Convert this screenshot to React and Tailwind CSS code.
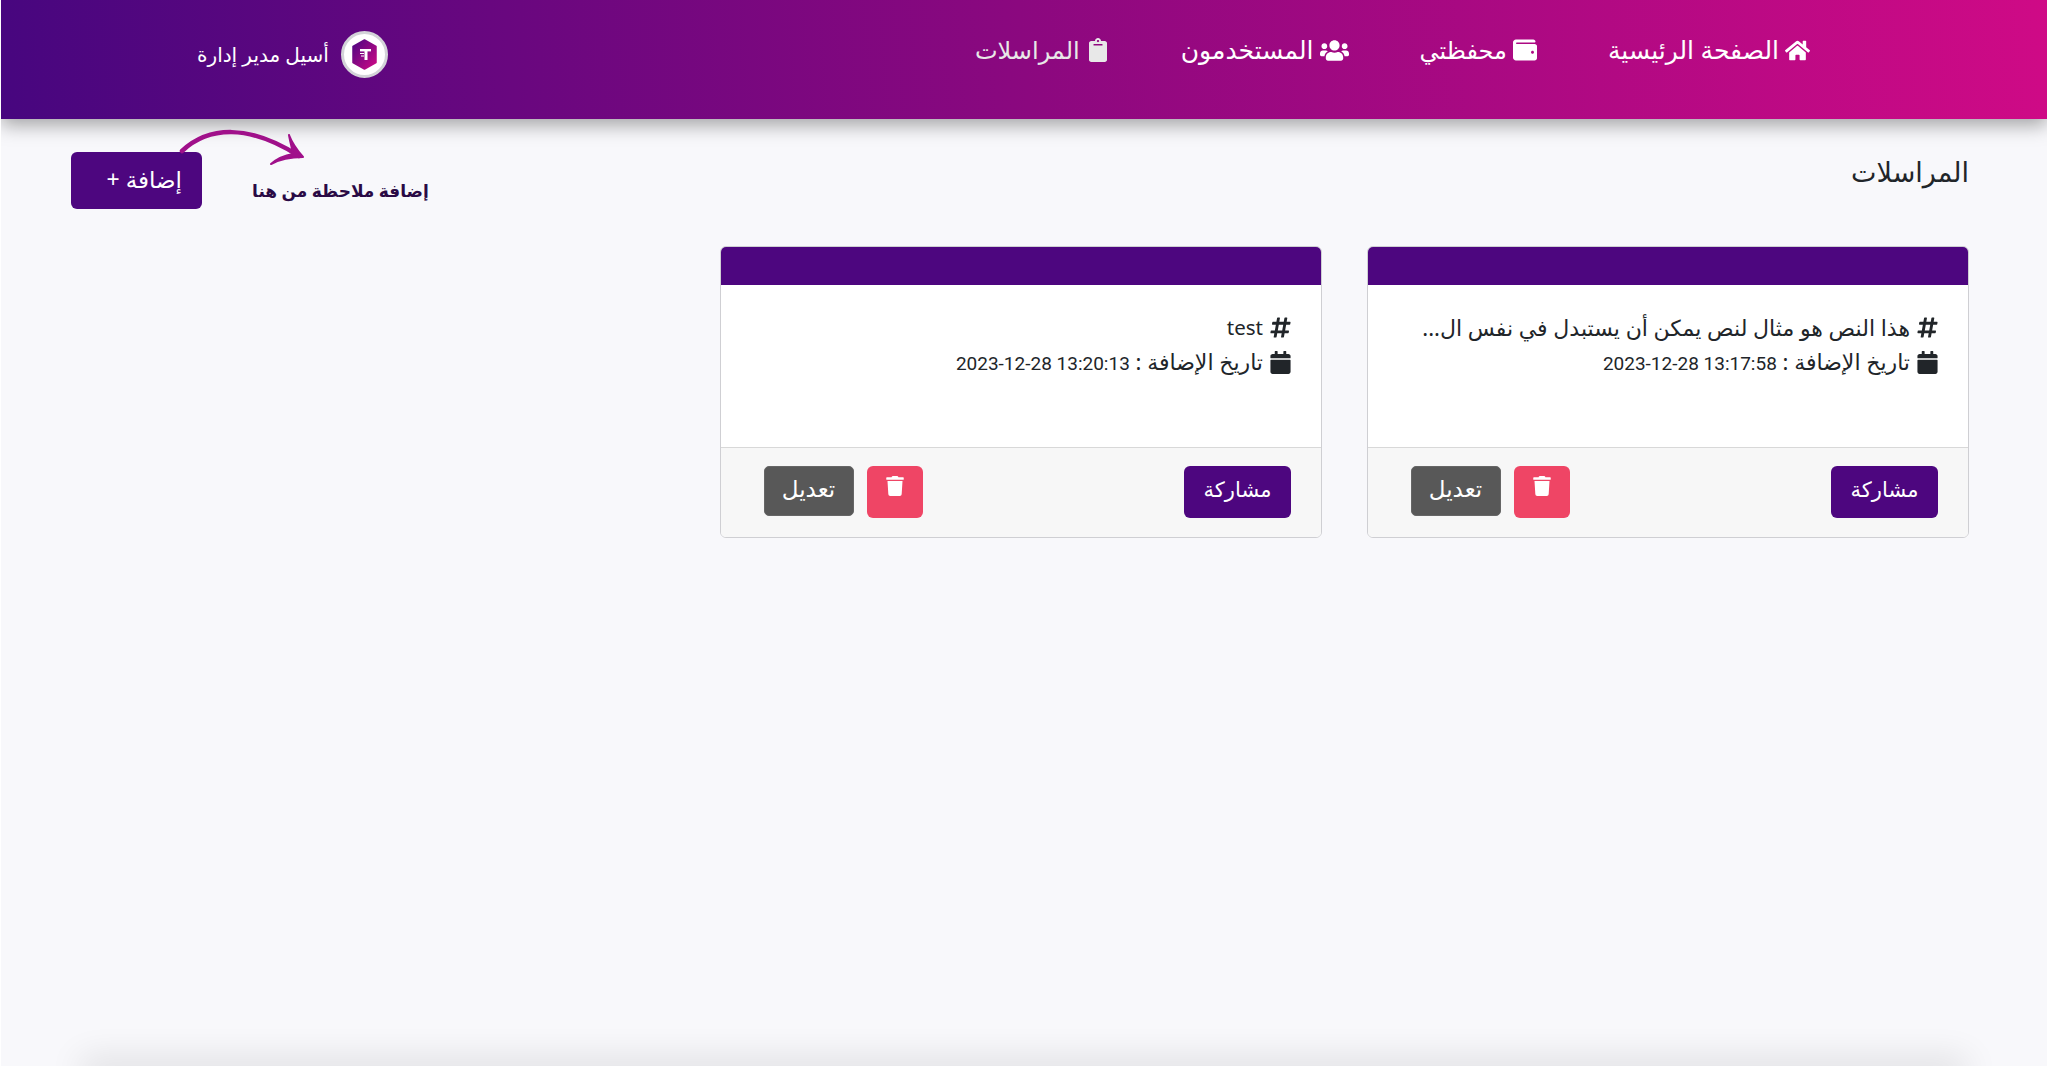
import React from 'react';
import { FaHome, FaWallet, FaUsers, FaClipboard, FaCalendar, FaHashtag, FaTrash } from 'react-icons/fa';

const navItems = [
  { label: 'الصفحة الرئيسية', icon: FaHome, size: 'text-[25px]', text: 'text-[25px] text-white' },
  { label: 'محفظتي', icon: FaWallet, size: 'text-[24px]', text: 'text-[24px] text-white' },
  { label: 'المستخدمون', icon: FaUsers, size: 'text-[29px]', text: 'text-[25px] text-white' },
  { label: 'المراسلات', icon: FaClipboard, size: 'text-[24px]', text: 'text-[24px] text-[#e8e8e8]' },
];

const notes = [
  { id: 1, title: 'هذا النص هو مثال لنص يمكن أن يستبدل في نفس ال...', date: '2023-12-28 13:17:58' },
  { id: 2, title: 'test', date: '2023-12-28 13:20:13', latin: true },
];

const Logo = () => (
  <div className="flex h-[47px] w-[47px] items-center justify-center rounded-full border-[3px] border-[#d3d3d8] bg-white">
    <svg width="27" height="31" viewBox="0 0 27 31">
      <defs>
        <linearGradient id="hexFill" x1="0" y1="0" x2="1" y2="1">
          <stop offset="0" stopColor="#4b0682" />
          <stop offset="1" stopColor="#d00a85" />
        </linearGradient>
      </defs>
      <path d="M13.5 1 L25 7.5 V23.5 L13.5 30 L2 23.5 V7.5 Z" fill="url(#hexFill)" stroke="url(#hexFill)" strokeLinejoin="round" strokeWidth="1.5" />
      <rect x="9" y="10" width="11" height="2.4" fill="#fff" />
      <rect x="13.5" y="10" width="3" height="11" fill="#fff" />
      <rect x="9" y="14" width="4" height="1" fill="#fff" />
      <rect x="10" y="16.5" width="3" height="1" fill="#fff" />
    </svg>
  </div>
);

const Header = () => (
  <header className="flex h-[119px] shrink-0 items-start justify-between bg-[linear-gradient(85deg,#47067f_0%,#8b087f_50%,#cf0a86_100%)] pr-[237px] pl-[196px] shadow-[0_6px_18px_rgba(0,0,0,0.35)]">
    <nav className="flex items-center gap-[71px] pt-[33px]">
      {navItems.map((item) => (
        <a key={item.label} className={`flex h-[34px] items-center gap-[6px] ${item.text}`}>
          <item.icon className={item.size} />
          <span>{item.label}</span>
        </a>
      ))}
    </nav>
    <div className="flex items-center gap-[12px] pt-[31px]">
      <Logo />
      <span className="text-[20px] text-white">أسيل مدير إدارة</span>
    </div>
  </header>
);

const NoteCard = ({ note }) => (
  <div className="w-[602px] overflow-hidden rounded-[6px] border-[1.5px] border-[#cfcfd3] bg-white">
    <div className="h-[38px] bg-[#4d067f]" />
    <div className="h-[162px] pr-[29px] pl-[30px] pt-[25px] text-[22px] leading-[34px] text-[#212529]">
      <div className="flex items-center gap-[6px]">
        <FaHashtag className="shrink-0 text-[23px]" />
        <span className={`whitespace-nowrap ${note.latin ? 'text-[20.5px]' : ''}`}>{note.title}</span>
      </div>
      <div className="flex items-center gap-[6px]">
        <FaCalendar className="shrink-0 text-[23px]" />
        <span className="whitespace-nowrap">
          تاريخ الإضافة : <span dir="ltr" className="font-['Roboto',sans-serif] text-[19px] tracking-[-0.35px]">{note.date}</span>
        </span>
      </div>
    </div>
    <div className="flex h-[90px] items-start justify-between border-t border-[#d8d8d8] bg-[#f7f7f7] pt-[18px] pr-[30px] pl-[42.5px]">
      <button type="button" className="h-[52px] w-[107px] rounded-[6px] bg-[#4d067f] pb-[4px] text-[21px] text-white">مشاركة</button>
      <div className="flex gap-[13px]">
        <button type="button" className="flex h-[52px] w-[56px] justify-center rounded-[6px] bg-[#ef4565] pt-[10px] text-white">
          <FaTrash className="text-[20px]" />
        </button>
        <button type="button" className="h-[50px] w-[90px] rounded-[5px] border border-[#666] bg-[#585858] pb-[6px] text-[23px] text-white">تعديل</button>
      </div>
    </div>
  </div>
);

const AddHint = () => (
  <div className="relative flex items-start gap-[50px]">
    <span className="mt-[26px] whitespace-nowrap text-[17px] font-bold text-[#2a0a45]">إضافة ملاحظة من هنا</span>
    <button type="button" className="h-[57px] w-[131px] rounded-[6px] bg-[#4d067f] pr-[20px] pb-[2px] text-right text-[23px] text-white">إضافة +</button>
    {/* curved arrow from the button to the hint */}
    <svg className="absolute top-[-26px] left-[108px]" width="130" height="46" viewBox="0 0 130 46" fill="none">
      <path d="M3 25 C30 0 70 -2 120 30" stroke="#a0108a" strokeWidth="4.5" strokeLinecap="round" />
      <path d="M110 9 C113 17 118 24 124 31 C114 31 103 32 92 38 C100 31 108 29 114 28 C113 22 111 15 110 9 Z" fill="#a0108a" stroke="#a0108a" strokeWidth="2" strokeLinejoin="round" />
    </svg>
  </div>
);

export default function App() {
  return (
    <div dir="rtl" className="flex h-[1066px] flex-col overflow-hidden border-x border-white bg-[#f8f8fb] font-['Noto_Sans','DejaVu_Sans',sans-serif]">
      <Header />
      <main className="flex-1 pt-[33px] pr-[78px] pl-[70px]">
        <div className="flex items-start justify-between">
          <h2 className="pt-[2px] text-[27px] leading-[36px] text-[#212529]">المراسلات</h2>
          <AddHint />
        </div>
        <div className="mt-[37px] flex gap-[45px]">
          {notes.map((note) => (
            <NoteCard key={note.id} note={note} />
          ))}
        </div>
      </main>
      <footer className="mx-[90px] h-[3px] shrink-0 translate-y-[6px] shadow-[0_0_34px_10px_rgba(0,0,0,0.12)]" />
    </div>
  );
}
